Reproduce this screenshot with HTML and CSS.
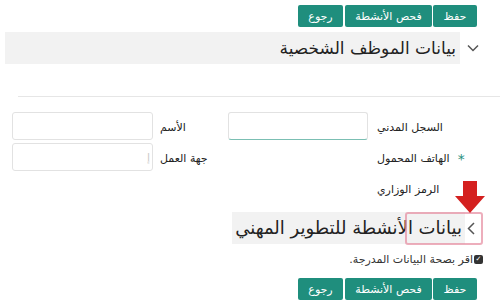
FILE: index.html
```html
<!DOCTYPE html>
<html lang="ar" dir="rtl">
<head>
  <meta charset="UTF-8">
  <title>بيانات الموظف</title>
  <link rel="stylesheet" href="styles.css">
</head>
<body>

  <div class="actions">
    <button class="btn save">حفظ</button>
    <button class="btn check">فحص الأنشطة</button>
    <button class="btn back">رجوع</button>
  </div>

  <div class="section-head">
    <span class="chev">
      <svg width="12" height="8" viewBox="0 0 12 8"><path d="M1 1.5 L6 6.5 L11 1.5" fill="none" stroke="#555" stroke-width="1.5"/></svg>
    </span>
    <div class="title wide">بيانات الموظف الشخصية</div>
  </div>

  <div class="divider"></div>

  <div class="form">
    <label class="lbl">السجل المدني</label>
    <input class="field focus" type="text">
    <label class="lbl">الأسم</label>
    <input class="field" type="text">

    <label class="lbl"><span class="req">*</span> الهاتف المحمول</label>
    <div></div>
    <label class="lbl">جهة العمل</label>
    <input class="field" type="text" placeholder="إ">

    <label class="lbl">الرمز الوزاري</label>
    <div></div>
    <div></div>
    <div></div>
  </div>

  <div class="section-head second">
    <span class="chev">
      <svg width="8" height="13" viewBox="0 0 8 13"><path d="M7 1 L1.5 6.5 L7 12" fill="none" stroke="#555" stroke-width="1.5"/></svg>
    </span>
    <div class="title">بيانات الأنشطة للتطوير المهني</div>
    <div class="mark"></div>
    <svg class="arrow" width="30" height="32" viewBox="0 0 30 32"><path d="M8 0 H22 V15 H30 L15 32 L0 15 H8 Z" fill="#d4201f"/></svg>
  </div>

  <div class="confirm">
    <span class="box">✓</span>اقر بصحة البيانات المدرجة.
  </div>

  <div class="actions bottom">
    <button class="btn save">حفظ</button>
    <button class="btn check">فحص الأنشطة</button>
    <button class="btn back">رجوع</button>
  </div>

</body>
</html>
```

FILE: styles.css
```css
body { margin: 0; direction: rtl; font-family: "DejaVu Sans", sans-serif; background: #fff; color: #222; }

.actions { display: flex; gap: 1px; padding: 5px 23px 0 0; }
.actions.bottom { padding-top: 12px; }
.btn { background: #1f8e7d; color: #fff; border: none; border-radius: 2px; height: 22px; padding: 0; font-family: inherit; font-size: 11px; text-align: center; }
.btn.save { width: 44px; }
.btn.check { width: 87px; }
.btn.back { width: 45px; margin-right: 1px; }

.section-head { display: flex; align-items: center; margin-top: 5px; position: relative; }
.chev { width: 40px; height: 32px; display: flex; align-items: center; justify-content: center; padding-right: 14px; box-sizing: border-box; }
.title { background: #f2f2f2; height: 32px; line-height: 32px; font-size: 17px; color: #222; padding: 0 4px; }
.title.wide { flex: 1; margin-left: 5px; }

.divider { border-top: 1px solid #e6e6e6; width: 482px; margin-top: 32px; }

.form { display: grid; grid-template-columns: 109px 140px 75px 141px; grid-auto-rows: 31px; margin: 15px 23px 0 0; width: 465px; }
.lbl { font-size: 11px; color: #222; display: flex; align-items: center; justify-content: flex-end; padding-left: 7px; }
.form .lbl:nth-child(4n+1) { padding-left: 9px; }
.req { color: #1f8e7d; font-size: 14px; margin-left: 8px; }
.field { height: 28px; box-sizing: border-box; border: 1px solid #e2e2e2; border-radius: 3px; margin: 0 0 3px; font-family: inherit; font-size: 11px; }
.field::placeholder { color: #ccc; }
.field.focus { border-bottom-color: #7bbfb3; }

.section-head.second { margin-top: 7px; }
.second .chev { width: 11px; margin-right: 24px; padding: 0; }
.second .title { padding: 0 3px; font-size: 18px; }
.mark { position: absolute; right: 17px; top: 0; width: 74px; height: 29px; border: 2px solid rgba(230, 140, 160, 0.7); border-radius: 3px; }
.arrow { position: absolute; right: 15px; top: -31px; }

.confirm { font-size: 11px; color: #333; padding: 9px 17px 0 0; display: flex; align-items: center; }
.box { width: 9px; height: 9px; background: #333; color: #fff; font-size: 7px; line-height: 9px; text-align: center; border-radius: 2px; margin-left: 1px; }
```
